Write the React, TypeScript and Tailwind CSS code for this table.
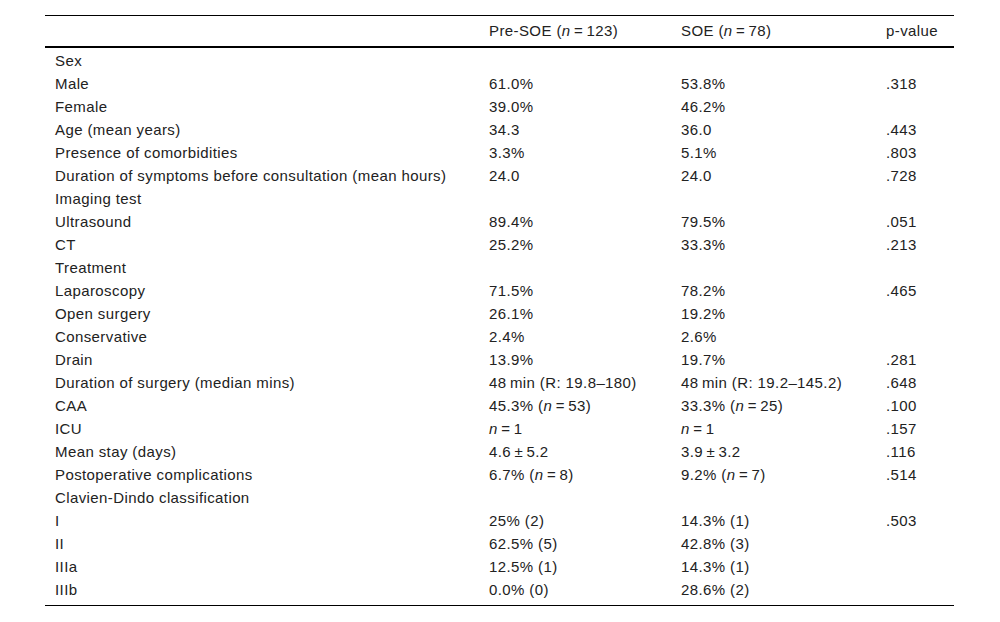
const rows: [React.ReactNode, React.ReactNode, React.ReactNode, React.ReactNode][] = [
  ["Sex", "", "", ""],
  ["Male", "61.0%", "53.8%", ".318"],
  ["Female", "39.0%", "46.2%", ""],
  ["Age (mean years)", "34.3", "36.0", ".443"],
  ["Presence of comorbidities", "3.3%", "5.1%", ".803"],
  ["Duration of symptoms before consultation (mean hours)", "24.0", "24.0", ".728"],
  ["Imaging test", "", "", ""],
  ["Ultrasound", "89.4%", "79.5%", ".051"],
  ["CT", "25.2%", "33.3%", ".213"],
  ["Treatment", "", "", ""],
  ["Laparoscopy", "71.5%", "78.2%", ".465"],
  ["Open surgery", "26.1%", "19.2%", ""],
  ["Conservative", "2.4%", "2.6%", ""],
  ["Drain", "13.9%", "19.7%", ".281"],
  ["Duration of surgery (median mins)", "48\u2009min (R: 19.8–180)", "48\u2009min (R: 19.2–145.2)", ".648"],
  ["CAA", <>45.3% (<i>n</i>{"\u2009=\u2009"}53)</>, <>33.3% (<i>n</i>{"\u2009=\u2009"}25)</>, ".100"],
  ["ICU", <><i>n</i>{"\u2009=\u2009"}1</>, <><i>n</i>{"\u2009=\u2009"}1</>, ".157"],
  ["Mean stay (days)", "4.6\u2009±\u20095.2", "3.9\u2009±\u20093.2", ".116"],
  ["Postoperative complications", <>6.7% (<i>n</i>{"\u2009=\u2009"}8)</>, <>9.2% (<i>n</i>{"\u2009=\u2009"}7)</>, ".514"],
  ["Clavien-Dindo classification", "", "", ""],
  ["I", "25% (2)", "14.3% (1)", ".503"],
  ["II", "62.5% (5)", "42.8% (3)", ""],
  ["IIIa", "12.5% (1)", "14.3% (1)", ""],
  ["IIIb", "0.0% (0)", "28.6% (2)", ""],
];

export default function App() {
  return (
    <div className="w-[1000px] h-[622px] bg-white pt-[15px] pl-[45px] text-[15px] tracking-[0.4px] text-[#222] font-['Liberation_Sans',Arial,sans-serif]">
      <div className="w-[909px] border-t border-b border-black pb-[4px]">
        <div className="grid grid-cols-[434px_192px_205px_78px] h-[32px] items-center border-b-2 border-black pt-[1px]">
          <div></div>
          <div className="pl-[10px]">
            Pre-SOE (<i>n</i>{"\u2009=\u2009"}123)
          </div>
          <div className="pl-[10px]">
            SOE (<i>n</i>{"\u2009=\u2009"}78)
          </div>
          <div className="pl-[10px]">p-value</div>
        </div>
        <div className="pt-[1px]">
          {rows.map((r, i) => (
            <div key={i} className="grid grid-cols-[434px_192px_205px_78px] h-[23px] leading-[23px]">
              <div className="pl-[10px]">{r[0]}</div>
              <div className="pl-[10px]">{r[1]}</div>
              <div className="pl-[10px]">{r[2]}</div>
              <div className="pl-[10px]">{r[3]}</div>
            </div>
          ))}
        </div>
      </div>
    </div>
  );
}
